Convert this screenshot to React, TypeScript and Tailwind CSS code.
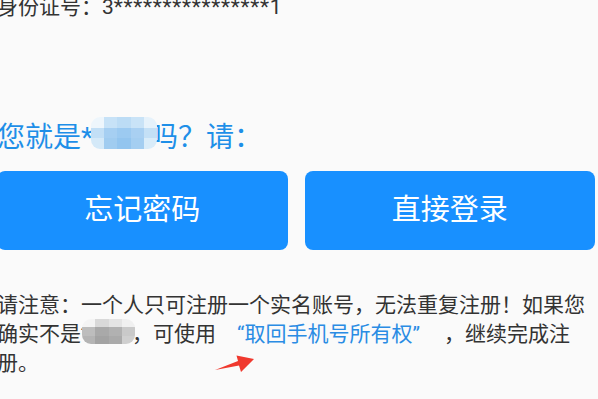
import type { ReactNode } from 'react';

const FONT = { fontFamily: 'Roboto, "Noto Sans CJK SC", sans-serif' };

// pixelated blob that hides part of a name
function Mosaic({ cells, cols, className }: { cells: string[]; cols: number; className: string }) {
  return (
    <span className={`absolute grid overflow-hidden rounded-[9px] blur-[0.6px] ${className}`} style={{ gridTemplateColumns: `repeat(${cols}, 1fr)` }}>
      {cells.map((c, i) => (
        <span key={i} className="block" style={{ backgroundColor: c }} />
      ))}
    </span>
  );
}

function Hidden({ width, children }: { width: string; children: ReactNode }) {
  return <span className={`relative inline-block h-[1px] ${width}`}>{children}</span>;
}

export default function App() {
  return (
    <div className="relative h-[399px] w-[598px] overflow-hidden bg-[#fafafa]" style={FONT}>
      <div className="-ml-[3px] w-[601px]">
        <p className="-mt-[7px] text-[21px] leading-[29px] text-[#333]">
          身份证号：3<span className="tracking-[0.7px]">****************</span>1
        </p>

        <h2 className="mt-[96px] text-[28px] leading-[40px] font-normal text-[#1e8fe8]">
          您就是*
          <Hidden width="w-[57px]">
            <Mosaic
              cols={5}
              className="-bottom-[2px] -left-[2px] h-[32px] w-[66px]"
              cells={['#eef6fc', '#c7e2f7', '#bcdcf5', '#c9e3f7', '#e6f2fb', '#c2dff6', '#a6cff2', '#9ccaf1', '#a9d0f2', '#c4e0f6', '#d4e9f8', '#a0ccf0', '#93c5ef', '#a4cef1', '#d9ecf9']}
            />
          </Hidden>
          吗？请：
        </h2>

        <div className="mt-[13px] flex gap-[17px] pr-[3px]">
          <button className="flex h-[79px] flex-1 items-center justify-center rounded-[8px] bg-[#1890ff] text-[29px] text-white">忘记密码</button>
          <button className="flex h-[79px] flex-1 items-center justify-center rounded-[8px] bg-[#1890ff] text-[29px] text-white">直接登录</button>
        </div>

        <p className="mt-[41px] w-[590px] text-[21px] leading-[29px] text-[#333]">
          请注意：一个人只可注册一个实名账号，无法重复注册！如果您确实不是*
          <Hidden width="w-[42px]">
            <Mosaic
              cols={4}
              className="-bottom-[3px] -left-[8px] h-[25px] w-[53px]"
              cells={['#f4f4f4', '#d9d9d9', '#e4e4e4', '#f0f0f0', '#bdbdbd', '#a9a9a9', '#b1b1b1', '#c9c9c9', '#b4b4b4', '#a3a3a3', '#aaaaaa', '#cfcfcf']}
            />
          </Hidden>
          ，可使用
          <span className="ml-[21px] mr-[24px] text-[#2a8ce4]">“取回手机号所有权”</span>
          ，继续完成注册。
        </p>
      </div>

      {/* red annotation arrow */}
      <svg className="absolute left-0 top-0" width="598" height="399" viewBox="0 0 598 399">
        <polygon points="215,370 238,361 236.5,355.5 254,359 241,372 239,365.5" fill="#f0392e" />
      </svg>
    </div>
  );
}
